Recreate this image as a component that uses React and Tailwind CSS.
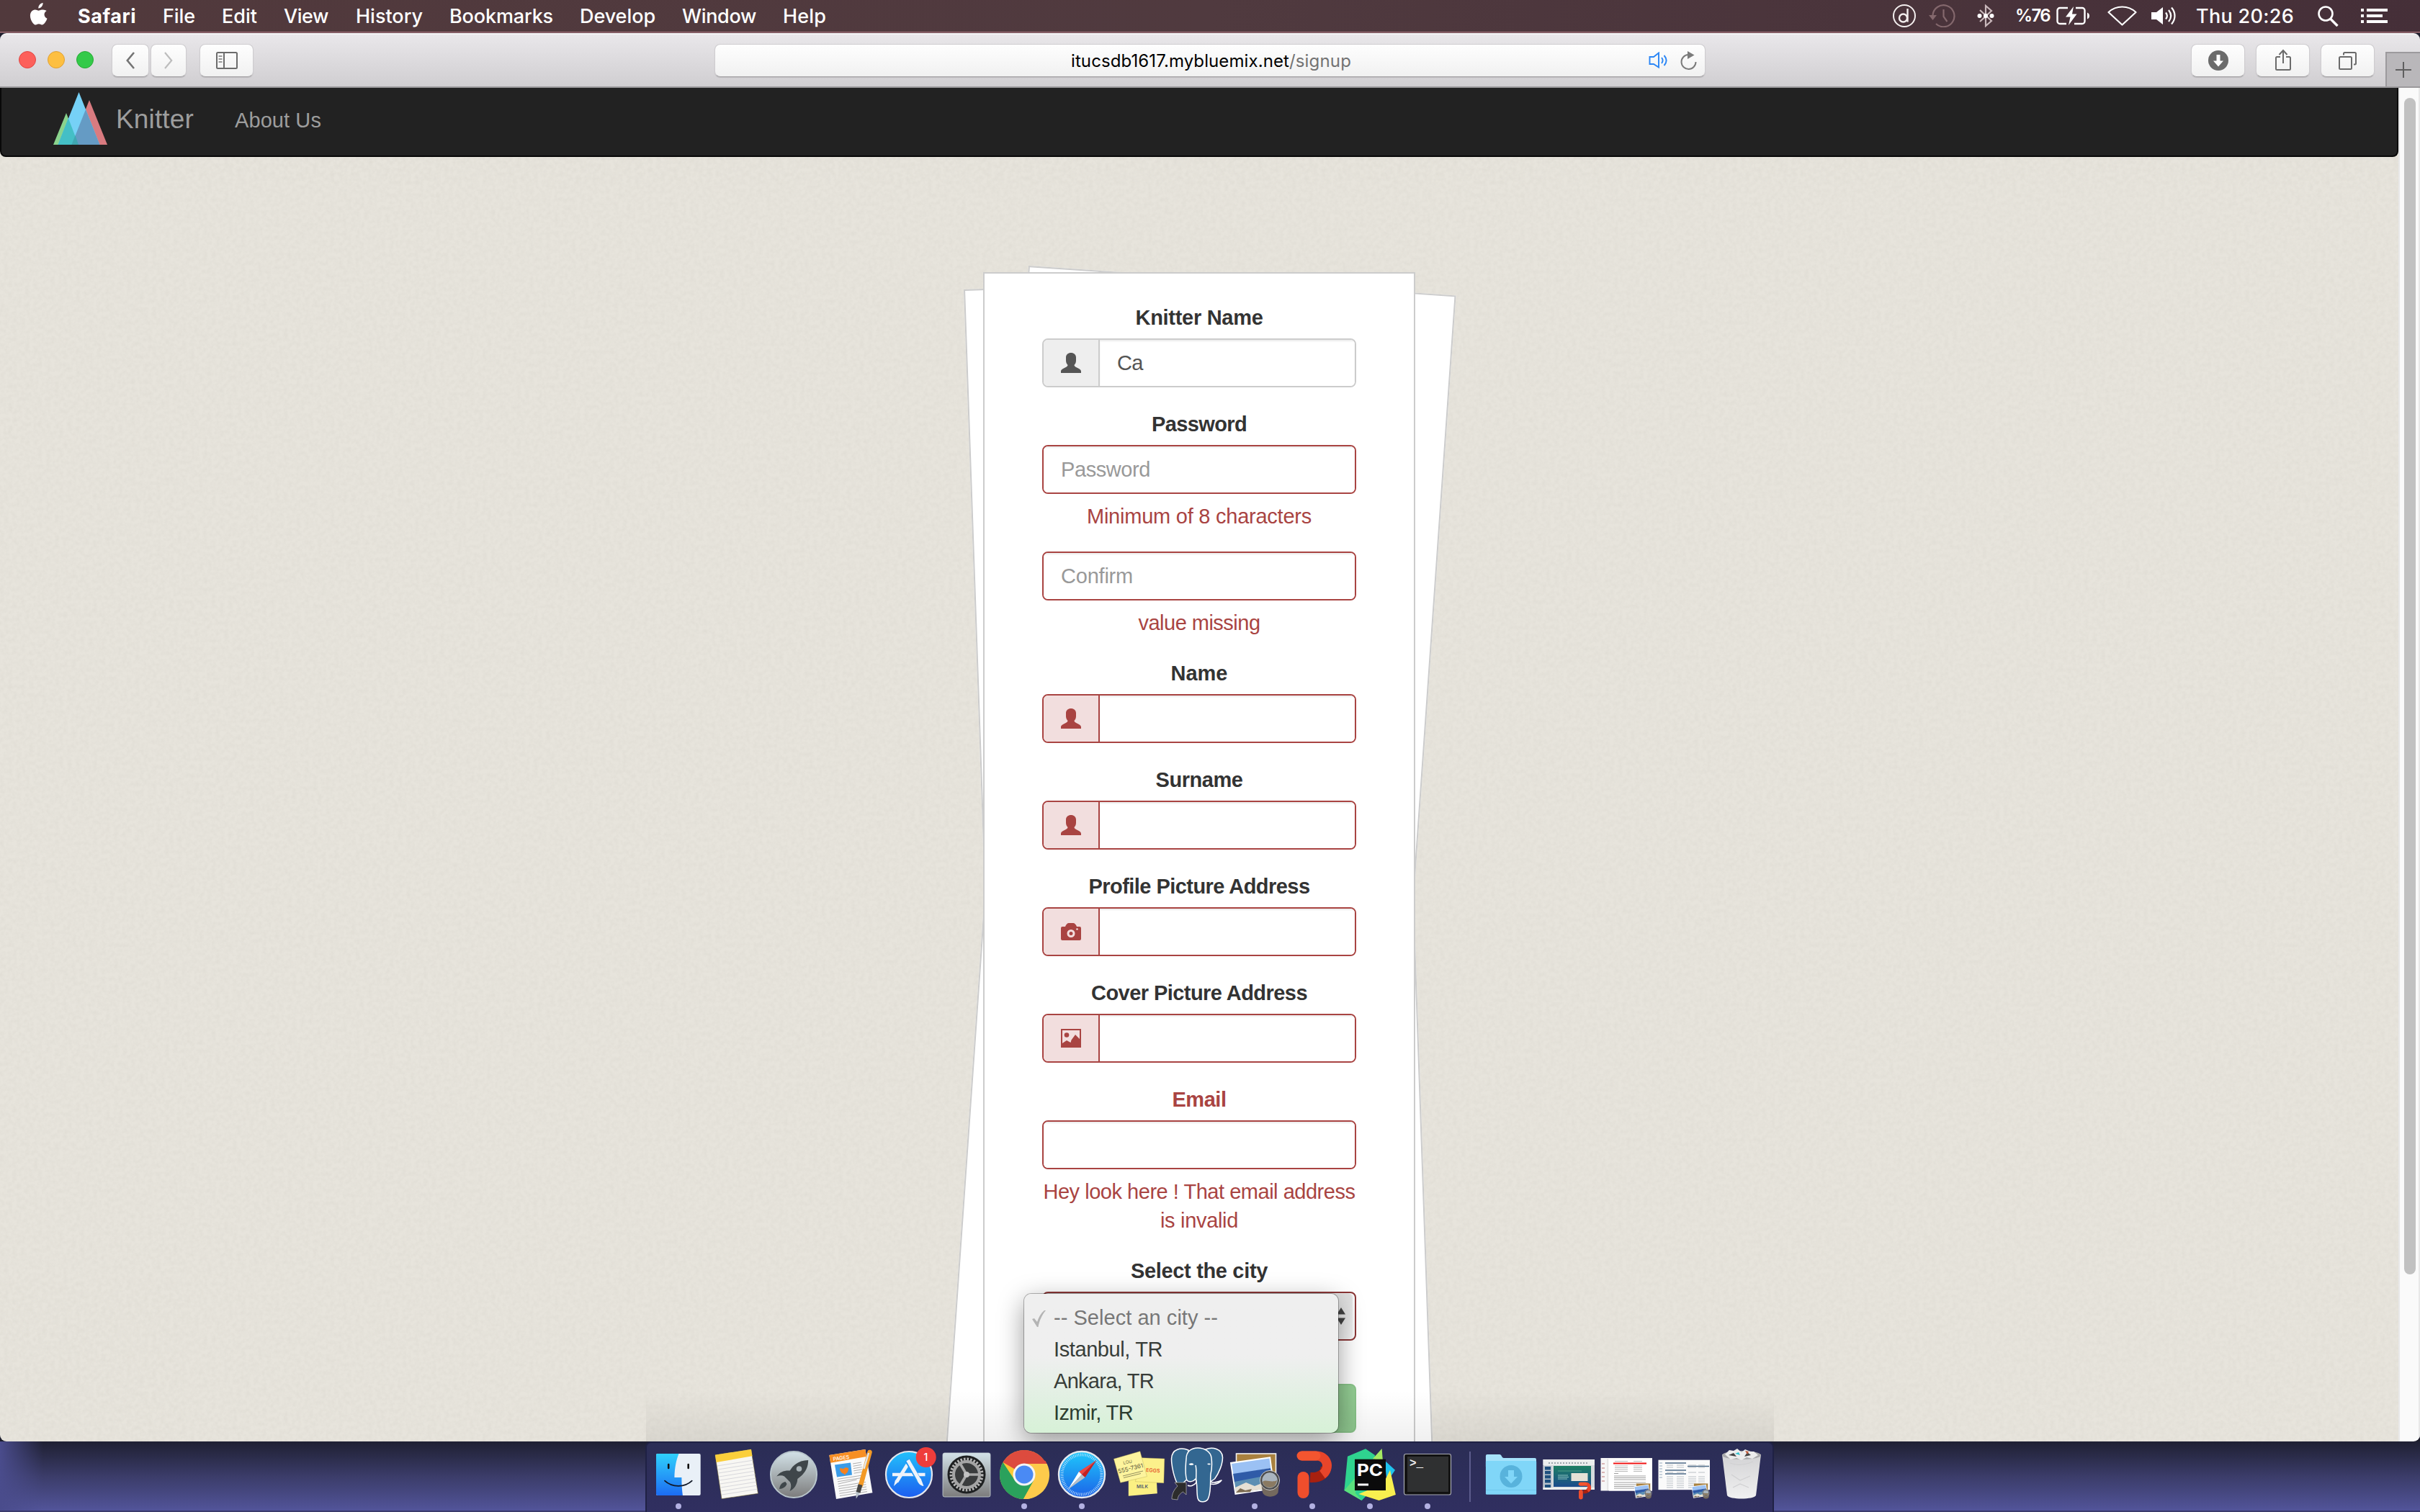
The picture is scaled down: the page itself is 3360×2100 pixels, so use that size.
import React, { useLayoutEffect, useRef, useState } from "react";

/* Text whose letter spacing is adjusted so that it fills exactly `w` pixels. */
function Fit({ w, className = "", children }) {
  const ref = useRef(null);
  const [spacing, setSpacing] = useState(0);
  useLayoutEffect(() => {
    const natural = ref.current.getBoundingClientRect().width;
    setSpacing((w - natural) / ref.current.textContent.length);
  }, []);
  return (
    <span ref={ref} className={"inline-block whitespace-pre " + className} style={{ letterSpacing: spacing + "px" }}>
      {children}
    </span>
  );
}

const MENUS = [
  ["File", 45, "ml-[37px]"],
  ["Edit", 49, "ml-[37px]"],
  ["View", 62, "ml-[37px]"],
  ["History", 93, "ml-[38px]"],
  ["Bookmarks", 144, "ml-[37px]"],
  ["Develop", 105, "ml-[37px]"],
  ["Window", 103, "ml-[37px]"],
  ["Help", 60, "ml-[37px]"],
];

function MenuBar() {
  return (
    <header className="flex h-11 w-full shrink-0 items-center bg-linear-to-r from-[#51393c] via-[#503a3f] to-[#452f38] pl-[41px] font-['Inter',sans-serif] text-[27px] leading-none text-white">
      <svg className="-mt-[5px] h-[32px] w-[27px]" viewBox="0 0 27 32" fill="#fff">
        <path d="M18.6 0c.2 2-.6 3.900-1.800 5.300-1.200 1.400-2.900 2.400-4.500 2.200-.2-1.900.7-3.900 1.700-5.100C15.200 1 17.200.1 18.600 0zM23.700 10.900c-2 1.200-3.200 3-3.200 5.200 0 2.600 1.600 4.700 4 5.600-.6 1.900-1.500 3.700-2.700 5.300-1.200 1.700-2.400 3.400-4.300 3.400-1.900 0-2.500-1.100-4.600-1.100-2.100 0-2.800 1.100-4.500 1.200-1.900.1-3.300-1.800-4.500-3.500C1.400 23.500-.4 17.200 2.100 13c1.200-2.100 3.400-3.400 5.700-3.500 1.800 0 3.500 1.200 4.600 1.200 1.100 0 3.200-1.500 5.300-1.300.9 0 4 .4 6 1.500z" />
      </svg>
      <Fit w={81} className="ml-[40px] font-bold">Safari</Fit>
      {MENUS.map(([t, w, c]) => (
        <Fit key={t} w={w} className={c + " font-medium"}>{t}</Fit>
      ))}
      <div className="ml-auto flex items-center">
        <svg className="h-8 w-8" viewBox="0 0 32 32" fill="none" stroke="#f3eeee" strokeWidth="2">
          <circle cx="16" cy="16" r="15" />
          <circle cx="14.500" cy="19" r="5.500" strokeWidth="2.400" />
          <path d="M20.500 6v18.500" strokeWidth="2.400" />
        </svg>
        <svg className="ml-[17px] h-8 w-[38px]" viewBox="0 0 38 32" fill="none" stroke="#84686d" strokeWidth="2.200">
          <path d="M6.500 15A15 15 0 1 1 11 27" />
          <path d="M1 15h11l-5.500 7z" fill="#84686d" stroke="none" />
          <path d="M21.500 7v10l5 7" />
        </svg>
        <svg className="ml-[30px] h-8 w-[24px]" viewBox="0 0 24 32" fill="none" stroke="#c9b8bb" strokeWidth="2.200">
          <path d="M4 8l16 15-8 7V2l8 7L4 24" />
          <g fill="#fff" stroke="none"><circle cx="3.500" cy="16" r="3" /><circle cx="12" cy="16" r="3" /><circle cx="20.500" cy="16" r="3" /></g>
        </svg>
        <Fit w={48} className="ml-[29px] text-[24px] font-semibold">%76</Fit>
        <svg className="ml-[9px] h-[26px] w-[47px]" viewBox="0 0 47 26" fill="none" stroke="#fff" strokeWidth="2.400">
          <path d="M16 2H5a3.500 3.500 0 0 0-3.500 3.500v15A3.500 3.500 0 0 0 5 24h9M27 2h9a3.500 3.500 0 0 1 3.500 3.500v15A3.500 3.500 0 0 1 36 24H25" />
          <path d="M43 8.500c4 1.500 4 7.500 0 9z" fill="#fff" stroke="none" />
          <path d="M24 0L13 14.500h6.500L17 26l11.500-15.500H22z" fill="#fff" stroke="none" />
        </svg>
        <svg className="ml-[24px] h-[28px] w-[41px]" viewBox="0 0 41 28" fill="none" stroke="#fff" strokeWidth="2.200" strokeLinejoin="round">
          <path d="M1.500 9C12-1 29-1 39.500 9l-19 17.500z" />
        </svg>
        <svg className="ml-[20px] h-[26px] w-[35px]" viewBox="0 0 35 26" fill="none" stroke="#fff" strokeWidth="2.200">
          <path d="M0 8h7l9-7v24l-9-7H0z" fill="#fff" stroke="none" />
          <path d="M20 8.500c2.500 3 2.500 6 0 9M24 5c4 5 4 11 0 16M28 1.500c6 7 6 16 0 23" />
        </svg>
        <Fit w={136} className="ml-[27px] font-medium">Thu 20:26</Fit>
        <svg className="ml-[33px] h-[29px] w-[30px]" viewBox="0 0 30 29" fill="none" stroke="#fff" strokeWidth="2.600">
          <circle cx="11" cy="11" r="9.500" /><path d="M17.500 18l10 10" strokeWidth="3.400" />
        </svg>
        <svg className="mr-[45px] ml-[30px] h-5 w-[37px]" viewBox="0 0 37 20" fill="#fff">
          <path d="M0 0h4v4H0zM8 0h29v4H8zM0 8h4v4H0zM8 8h22v4H8zM0 16h4v4H0zM8 16h29v4H8z" />
        </svg>
      </div>
    </header>
  );
}

function ToolButton({ className, children }) {
  return (
    <div className={"flex h-[46px] items-center justify-center rounded-[8px] border border-[#cfcdd0] border-b-[#a5a3a6] bg-linear-to-b from-[#fefefe] to-[#f1f1f1] shadow-[0_1px_1px_rgba(0,0,0,0.12)] " + className}>
      {children}
    </div>
  );
}

function Toolbar() {
  return (
    <div className="flex h-[76px] w-full shrink-0 items-start border-t-2 border-b-2 border-t-[#f5f4f6] border-b-[#9b999c] bg-linear-to-b from-[#e9e7ea] to-[#d0ced1]">
      <div className="mt-[23px] ml-[26px] flex gap-4">
        <i className="size-6 rounded-full border border-[#e04643] bg-[#fc605b]" />
        <i className="size-6 rounded-full border border-[#dfa035] bg-[#fdbf41]" />
        <i className="size-6 rounded-full border border-[#27a934] bg-[#34ca49]" />
      </div>
      <div className="mt-[13px] ml-[25px] flex">
        <ToolButton className="w-[52px]">
          <svg className="h-6 w-3" viewBox="0 0 12 24" fill="none" stroke="#747474" strokeWidth="2.600"><path d="M11 1L1.800 12 11 23" /></svg>
        </ToolButton>
        <ToolButton className="ml-[2px] w-[50px]">
          <svg className="h-6 w-3" viewBox="0 0 12 24" fill="none" stroke="#bdbdbd" strokeWidth="2.200"><path d="M1 1l9.200 11L1 23" /></svg>
        </ToolButton>
        <ToolButton className="ml-[18px] w-[75px]">
          <svg className="h-6 w-[30px]" viewBox="0 0 30 24" fill="none" stroke="#6c6c6c" strokeWidth="2">
            <rect x="1" y="1" width="28" height="22" rx="1.500" /><path d="M11 1v22" /><path d="M3.500 6h5M3.500 10h5M3.500 14h5" stroke="#999" />
          </svg>
        </ToolButton>
      </div>
      <ToolButton className="mt-[13px] ml-[640px] w-[1376px] font-['Inter',sans-serif] text-[24px]">
        <div className="mt-[2px] ml-[494px] flex leading-none text-black">
          <Fit w={303}>itucsdb1617.mybluemix.net</Fit>
          <Fit w={86} className="text-[#737373]">/signup</Fit>
        </div>
        <svg className="ml-auto h-[24px] w-[32px]" viewBox="0 0 32 24" fill="none" stroke="#2b86f5" strokeWidth="1.900">
          <path d="M1.500 7h5.500l7-5.500v20L7 17H1.500z" /><path d="M18 8c2 2.500 2 5.500 0 8M21.500 5c4 4.500 4 9.500 0 14" />
        </svg>
        <svg className="mr-[11px] ml-[11px] h-[27px] w-[24px]" viewBox="0 0 24 27" fill="none" stroke="#7b7b7b" strokeWidth="2">
          <path d="M12 5A10 10 0 1 0 22.500 15" /><path d="M11 0l9.500 5.500L11 11z" fill="#7b7b7b" stroke="none" />
        </svg>
      </ToolButton>
      <div className="mt-[13px] ml-auto flex gap-[15px]">
        <ToolButton className="w-[75px]">
          <svg className="size-7" viewBox="0 0 28 28"><circle cx="14" cy="14" r="14" fill="#6b6b6b" /><path d="M11.500 6h5v8.500h4.500L14 22.500 7 14.500h4.500z" fill="#fff" /></svg>
        </ToolButton>
        <ToolButton className="w-[75px]">
          <svg className="-mt-[2px] h-[31px] w-[24px]" viewBox="0 0 24 31" fill="none" stroke="#6b6b6b" strokeWidth="2">
            <path d="M8 11H3.500A1.500 1.500 0 0 0 2 12.500v15A1.500 1.500 0 0 0 3.500 29h17a1.500 1.500 0 0 0 1.500-1.500v-15a1.500 1.500 0 0 0-1.500-1.500H16M12 20V2M6.500 8L12 2l5.500 6" />
          </svg>
        </ToolButton>
        <ToolButton className="w-[75px]">
          <svg className="size-[25px]" viewBox="0 0 25 25" fill="none" stroke="#6b6b6b" strokeWidth="2">
            <rect x="1" y="7" width="17" height="17" rx="1.500" /><path d="M7 4.500V2.500A1.500 1.500 0 0 1 8.500 1h14A1.500 1.500 0 0 1 24 2.500V16a1.500 1.500 0 0 1-1.500 1.500H21" />
          </svg>
        </ToolButton>
      </div>
      <div className="mt-6 ml-[15px] flex h-12 w-12 items-center justify-center border-t-2 border-l-2 border-[#9c9a9d] bg-[#b9b7ba]">
        <svg className="size-[22px]" viewBox="0 0 22 22" stroke="#5f5f5f" strokeWidth="2"><path d="M11 0v22M0 11h22" /></svg>
      </div>
    </div>
  );
}

function NavBar() {
  return (
    <nav className="flex h-[96px] w-[3330px] items-start rounded-b-[8px] border-x-2 border-b-2 border-[#080808] bg-[#222]">
      <svg className="mt-[6px] ml-[72px] h-[73px] w-[75px]" viewBox="0 0 75 73">
        <path d="M18 29L0 73h35z" fill="#8ad48d" />
        <path d="M50 11L25.500 73H75z" fill="#d97b80" />
        <path d="M35.500 0L6.500 73h58z" fill="#76d1f6" />
        <path d="M20.800 36L6.500 73H35z" fill="#44bfc6" />
        <path d="M45 24L25.500 73h39z" fill="#659bc4" />
        <path d="M30.500 60L25.500 73H35z" fill="#3fa7b1" />
      </svg>
      <Fit w={108} className="mt-[24px] ml-[12px] text-[37px] leading-10 text-[#9d9d9d]">Knitter</Fit>
      <Fit w={120} className="mt-[25px] ml-[57px] text-[29px] leading-10 text-[#9d9d9d]">About Us</Fit>
    </nav>
  );
}

const UserIcon = () => (
  <svg className="size-7" viewBox="0 0 28 28" fill="currentColor">
    <path d="M7 6.500C7 2.500 10 0 14 0s7 2.500 7 6.500V11c0 3-1.500 5-2.500 6 0 1.500 1.500 2.500 4 3.700 4.500 2.100 5.500 3.300 5.500 5.300v2H0v-2c0-2 1-3.200 5.500-5.300C8 19.500 9.500 18.500 9.500 17 8.500 16 7 14 7 11z" />
  </svg>
);
const CameraIcon = () => (
  <svg className="h-6 w-7" viewBox="0 0 28 24">
    <path d="M2 5h4c1-3 3-5 5-5h6c2 0 4 2 5 5h4a2 2 0 0 1 2 2v15a2 2 0 0 1-2 2H2a2 2 0 0 1-2-2V7a2 2 0 0 1 2-2z" fill="currentColor" />
    <circle cx="14" cy="14.500" r="4" fill="none" stroke="#f2dede" strokeWidth="3" />
    <circle cx="22.500" cy="8.500" r="1.300" fill="#f2dede" />
  </svg>
);
const PictureIcon = () => (
  <svg className="h-[26px] w-7" viewBox="0 0 28 26">
    <path d="M0 0h28v26H0z" fill="currentColor" />
    <path d="M2 2h24v12l-6-6-5.500 7.500-1 3.500L8 16l-6 4z" fill="#f2dede" />
    <circle cx="8" cy="8.500" r="3.300" fill="currentColor" />
  </svg>
);

function Input({ icon, value, placeholder, normal }) {
  const line = normal ? "border-[#ccc]" : "border-[#a94442]";
  return (
    <div className={"flex h-[68px] w-full overflow-hidden rounded-[8px] border-2 " + line}>
      {icon && (
        <div className={"flex w-[78px] shrink-0 items-center justify-center border-r-2 " + (normal ? "border-[#ccc] bg-[#eee] text-[#555]" : "border-[#a94442] bg-[#f2dede] text-[#a94442]")}>
          {icon}
        </div>
      )}
      <div className="flex flex-1 items-center bg-white px-6 pt-px text-[29px] shadow-[inset_0_2px_2px_rgba(0,0,0,0.075)]">
        {value && <span className="tracking-tight text-[#555]">{value}</span>}
        {placeholder && <Fit w={placeholder[1]} className="text-[#999]">{placeholder[0]}</Fit>}
      </div>
    </div>
  );
}

function Group({ label, w, red, help, children }) {
  return (
    <div className="mb-[30px]">
      {label && (
        <div className="mb-[10px] flex h-10 justify-center pt-px">
          <Fit w={w} className={"text-[29px] leading-10 font-bold " + (red ? "text-[#a94442]" : "text-[#333]")}>{label}</Fit>
        </div>
      )}
      {children}
      {help && (
        <div className="mt-[11px] -mb-px flex flex-col items-center text-[29px] leading-10 text-[#a94442]">
          {help.map(([t, n]) => <Fit key={t} w={n}>{t}</Fit>)}
        </div>
      )}
    </div>
  );
}

function CitySelect() {
  return (
    <div className="relative h-[68px] w-full">
      <div className="flex h-full w-full items-center rounded-[8px] border-2 border-[#8b3636] bg-linear-to-b from-[#dedede] to-[#f2f2f2] shadow-[inset_-3px_0_2px_#fafafa]">
        <svg className="mr-[13px] ml-auto h-6 w-[12px]" viewBox="0 0 12 24" fill="#444"><path d="M6 0l6 9.500H0zM6 24l6-9.500H0z" /></svg>
      </div>
      <div className="absolute top-[3px] -left-[25px] z-20 flex h-[193px] w-[436px] flex-col rounded-[10px] bg-linear-to-b from-[#efefef] from-45% via-[#dff0e0] via-80% to-[#d7f1d7] pt-[12px] text-[29px] text-[#383d39] shadow-[0_0_0_1px_rgba(0,0,0,0.28),0_10px_36px_rgba(0,0,0,0.4)]">
        <div className="flex h-11 items-center text-[#777]">
          <svg className="ml-[11px] h-[23px] w-[19px]" viewBox="0 0 19 23" fill="#b4b4b4"><path d="M0 12l3-1 4 5C9 10 12 4 17 0l2 0C14 6 10 14 8.500 23H7z" /></svg>
          <Fit w={228} className="ml-[11px]">-- Select an city --</Fit>
        </div>
        <div className="flex h-11 items-center pl-[41px]"><Fit w={151}>Istanbul, TR</Fit></div>
        <div className="flex h-11 items-center pl-[41px]"><Fit w={139}>Ankara, TR</Fit></div>
        <div className="flex h-11 items-center pl-[41px] text-[#2c3d2f]"><Fit w={110}>Izmir, TR</Fit></div>
      </div>
    </div>
  );
}

function Page() {
  return (
    <main className="relative isolate h-[1880px] w-[3330px] overflow-hidden bg-[#e7e4dc]">
      <svg className="absolute inset-0 -z-20 h-full w-full" aria-hidden="true">
        <filter id="weave" x="0" y="0" width="100%" height="100%">
          <feTurbulence type="fractalNoise" baseFrequency="0.17" numOctaves="2" seed="4" />
          <feColorMatrix values="0 0 0 0 0.500  0 0 0 0 0.480  0 0 0 0 0.430  0.500 0 0 0 -0.170" />
        </filter>
        <rect width="100%" height="100%" filter="url(#weave)" opacity="0.5" />
      </svg>
      <NavBar />
      <div className="relative mt-[160px] ml-[1365px] w-[600px]">
        <div className="absolute top-[24px] -left-[27px] -z-10 h-[2200px] w-[595px] origin-top-left -rotate-2 border-2 border-[#ccc] bg-white" />
        <div className="absolute -top-[9px] left-[63px] -z-10 h-[2200px] w-[595px] origin-top-left rotate-4 border-2 border-[#ccc] bg-white" />
        <form className="h-[1800px] w-[600px] border-2 border-[#ccc] bg-white px-[80px] pt-[40px]">
          <Group label="Knitter Name" w={177}><Input normal icon={<UserIcon />} value="Ca" /></Group>
          <Group label="Password" w={132} help={[["Minimum of 8 characters", 312]]}><Input placeholder={["Password", 124]} /></Group>
          <Group help={[["value missing", 169]]}><Input placeholder={["Confirm", 100]} /></Group>
          <Group label="Name" w={79}><Input icon={<UserIcon />} /></Group>
          <Group label="Surname" w={121}><Input icon={<UserIcon />} /></Group>
          <Group label="Profile Picture Address" w={307}><Input icon={<CameraIcon />} /></Group>
          <Group label="Cover Picture Address" w={300}><Input icon={<PictureIcon />} /></Group>
          <Group label="Email" w={75} red help={[["Hey look here ! That email address", 433], ["is invalid", 108]]}><Input /></Group>
          <Group label="Select the city" w={190}><CitySelect /></Group>
          <div className="-mt-[30px] pt-[60px]"><div className="h-[68px] rounded-[8px] border-2 border-[#8ac58a] bg-[#93cd93]" /></div>
        </form>
      </div>
      <div className="pointer-events-none absolute bottom-0 left-[897px] z-10 h-[70px] w-[1566px] bg-linear-to-b from-transparent to-black/6" />
    </main>
  );
}

/* ---------- Dock ---------- */

const Finder = () => (
  <g>
    <rect x="9" y="17" width="61.700" height="58" rx="2" fill="#e9f0f7" />
    <path d="M11 17h29.500C36 28 34.500 40 34.400 50h10c0 10 .5 18 1.500 25H11a2 2 0 0 1-2-2V19a2 2 0 0 1 2-2z" fill="url(#finder)" />
    <path d="M26.200 32v5M53.700 32v5" stroke="#111" strokeWidth="2.600" strokeLinecap="round" />
    <path d="M21 54.700c10 9.500 28 9.500 37.700 0" fill="none" stroke="#111827" strokeWidth="1.800" strokeLinecap="round" />
  </g>
);
const Notes = () => (
  <g>
    <path d="M10.900 18.700L60.900 11l9.600 61.300L20 79.700z" fill="#f8f7f3" stroke="#6b5f2d" strokeWidth=".6" />
    <path d="M10.900 18.700L60.900 11l1.500 9.300L12.700 29z" fill="#fbcf3b" />
    {[0, 1, 2, 3, 4, 5, 6, 7, 8].map((i) => (
      <path key={i} d={`M${13.800 + i * 0.800} ${34 + i * 5}l49.500-7.800`} stroke="#cfcfd6" strokeWidth=".8" />
    ))}
  </g>
);
const Launchpad = () => (
  <g>
    <circle cx="40" cy="46" r="32" fill="url(#silver)" stroke="#b9c6cc" strokeWidth="2" />
    <path d="M60.200 26c-9 .3-16 3-22 9.500l-3.500 5c-8-.5-14 2-18.500 8 4-1.500 7.500-2 10.800 0l8 8c2 4 1.500 8-.5 12.500 6-3 10.500-9 10.800-17l5-4c7-6.500 9.700-13 9.900-22z" fill="#3f464a" />
    <circle cx="47.500" cy="38" r="3.800" fill="#aab4b8" />
    <path d="M28.500 56c-5 1-7.500 4-8.500 10 5-.3 9-2.500 10.500-7z" fill="#3f464a" />
  </g>
);
const Pages = () => (
  <g>
    <path d="M9.400 19l50-8 10 60.300L19 80z" fill="#fafafa" />
    <path d="M9.400 19l50-8 1.600 10-50 8.700z" fill="#f78f23" />
    <text x="15" y="27" transform="rotate(-8 15 27)" fontSize="7" fontWeight="500" fill="#fff" fontFamily="Inter">PAGES</text>
    <path d="M17 32.500l22-3 2 17-21 3z" fill="#3a9be8" />
    <path d="M24 37l5 1 3-2 4 1c0 5-2 7-4 8l-1 2-1-2c-4-1-6-4-6-8z" fill="#f58220" />
    {[0, 1, 2, 3, 4, 5, 6, 7].map((i) => (
      <path key={i} d={`M${20.500 + i * 0.500} ${52.500 + i * 3.300}l${i === 2 ? 26 : 38}-6`} stroke="#a6a6a6" strokeWidth=".9" />
    ))}
    {[0, 1, 2, 3, 4].map((i) => (
      <path key={i} d={`M${42 + i * 0.400} ${31 + i * 3.300}l12-2`} stroke="#a6a6a6" strokeWidth=".9" />
    ))}
    <path d="M65.500 15L53 61" stroke="#f39a26" strokeWidth="6.500" strokeLinecap="round" />
    <path d="M64 16L57.500 38" stroke="#dfe5ea" strokeWidth="2.500" />
    <path d="M52.500 60l-3 11" stroke="#444" strokeWidth="6" />
    <path d="M46.500 70l5.500 1.500-5.300 8z" fill="#b9c3cb" />
  </g>
);
const AppStore = () => (
  <g>
    <circle cx="40" cy="46" r="32" fill="url(#store)" stroke="#e4e6ec" strokeWidth="2.200" />
    <g stroke="#eef3fa" fill="none">
      <path d="M17 46h45.500" strokeWidth="4.600" />
      <path d="M38 32L23 56" strokeWidth="5" />
      <path d="M37.500 26l17 29" strokeWidth="7" stroke="#2196f3" /><path d="M38.500 26l16 28" strokeWidth="5" />
    </g>
    <path d="M21 53.500l4.500 2.600-6.500 6zM51.500 54l5-2.500 4 10.500c-4-.5-7.500-3-9-8z" fill="#eef3fa" />
    <circle cx="63.700" cy="22" r="14" fill="#ef3d3b" />
    <text x="63.500" y="27" textAnchor="middle" fontSize="14" fontWeight="500" fill="#fff" fontFamily="Inter">1</text>
  </g>
);
const Prefs = () => (
  <g>
    <rect x="7" y="16" width="66" height="61" rx="2.500" fill="url(#silver)" stroke="#c8d3d8" strokeWidth=".8" />
    <circle cx="40" cy="46" r="26.500" fill="#1e2021" />
    <circle cx="40" cy="46" r="21.500" fill="none" stroke="#b5b5b5" strokeWidth="4" strokeDasharray="2.600 2" />
    <circle cx="40" cy="46" r="18" fill="#3a3c3d" stroke="#a4a4a4" strokeWidth="4" />
    <path d="M40 46h18M40 46l-9-15.500M40 46l-9 15.500" stroke="#a8a8a8" strokeWidth="3.600" />
    <circle cx="40" cy="46" r="4" fill="#c2c2c2" />
  </g>
);
const Chrome = () => (
  <g>
    <circle cx="40" cy="46" r="34" fill="#fcc934" />
    <path d="M40 46L10.500 29A34 34 0 0 1 69.500 29z" fill="#dd4b3e" />
    <path d="M40 31h31.500a34 34 0 0 0-2-4L40 20z" fill="#dd4b3e" />
    <path d="M10.500 29A34 34 0 0 0 39 80L53.500 54 27 54z" fill="#2aa15c" />
    <path d="M40 31h31.600A34 34 0 0 1 39 80l14.500-26z" fill="#fdcb4b" />
    <circle cx="40" cy="46" r="15.500" fill="#f4f4f4" /><circle cx="40" cy="46" r="12.500" fill="#4a8af4" />
  </g>
);
const Safari = () => (
  <g>
    <circle cx="40" cy="46" r="32" fill="url(#compass)" stroke="#e6e9ee" strokeWidth="2.400" />
    <circle cx="40" cy="46" r="27.500" fill="none" stroke="#cbe8fb" strokeWidth="4" strokeDasharray=".8 1.600" />
    <path d="M60.500 26L36 42l4 4z" fill="#f0453f" /><path d="M60.500 26L44.500 50 40 46z" fill="#c8201f" />
    <path d="M21 66.500L36 42l4 4z" fill="#fff" /><path d="M21 66.500L44.500 50 40 46z" fill="#b9bfc6" />
  </g>
);
const Stickies = () => (
  <g fontFamily="Inter" fontSize="7.500">
    <path d="M24.800 52h39l1 20.300-40 3.400z" fill="#fbf083" />
    <path d="M43 22.700l31.800 1.300-1 33.700-39.500-2z" fill="#fcf18b" stroke="#b8a850" strokeWidth=".4" />
    <path d="M4.400 24.300L40.900 13.700l9.600 35-36.800 8.600z" fill="#fdf49d" stroke="#b8a850" strokeWidth=".4" />
    <text x="18" y="32" transform="rotate(-12 18 32)" fontSize="6" fill="#6d6a45">LOU</text>
    <text x="11" y="44.500" transform="rotate(-14 11 44.500)" fontSize="8" fill="#55533a">555-7361</text>
    <path d="M17 48l28-7M18 50.500l24-6" stroke="#777350" strokeWidth=".8" />
    <text x="49" y="42" transform="rotate(4 49 42)" fontSize="7" fontWeight="500" fill="#e2421c">EGGS</text>
    <text x="36" y="65" fontSize="6.500" fontWeight="500" fill="#3d4a6b">MILK</text>
  </g>
);
const Postgres = () => (
  <g fill="#336791" stroke="#fff" strokeWidth="1.500" strokeLinejoin="round">
    <path d="M28 12C18 8 5 10 4.500 24c0 11 4 28 9 36 3 3 6 1 8-3l6-6z" />
    <path d="M52 11c9-4 23-1 23.500 11 .3 9-5 22-11 30l-6 4z" />
    <path d="M25 24c0-10 7-15 16-15s18 5 19 14c.8 7 1 14-1 22-1 8 1 22-3 33-2 7-13 8-15 1-2-8 0-20-3-27-3 4-9 5-12 2-3-8-2-20-1-30z" />
    <path d="M38 33c2 8 0 16 1 24-3 4-8 6-12 4M59 56c4 2 9 1 15-2-4 5-10 6-15 5" fill="none" />
    <path d="M28.500 31.500c3-2 6-1.500 7 .5-2 1.500-5 1.500-7-.5zM54 31c2-1 4-.5 5 .5-2 1.500-4 1-5-.5z" fill="#fff" stroke="none" />
    <path d="M9 57h16v17l-4.500-4c-5 3-7 6-7.500 11l-8-1c0-7 3-13 8-18z" fill="#2c2c2c" stroke="#aaa" strokeWidth=".8" />
  </g>
);
const PreviewArt = () => (
  <g>
    <rect x="14.500" y="17" width="55" height="46" fill="#a9813f" stroke="#f3f3f3" strokeWidth="1.600" />
    <path d="M5.900 29L62 21.300 68 66l-55.400 8z" fill="#fff" />
    <path d="M8 31l52.500-7.500 1.800 13.500L10.500 46z" fill="#9bc1f4" />
    <path d="M10 45l52-8 2 10-52 10z" fill="#2f5ba8" />
    <path d="M12 56l52-10 2.300 18-52 7.500z" fill="#5c8fb3" />
    <path d="M13 64l15-7 12 5 10-4 16 6-52 8z" fill="#e6e0d4" /><path d="M14 71l6-6 7 3 9-2-2 4z" fill="#7c6b52" />
    <path d="M49 58h25l-1.500 13c-3 7-18 8-21.500 0z" fill="#74695e" />
    <circle cx="61" cy="54" r="12" fill="#a9b4bf" stroke="#4c4c4c" strokeWidth="2.600" /><circle cx="61" cy="54" r="13.600" fill="none" stroke="#c9c9c9" strokeWidth="1" />
    <path d="M51 56c5-4 12 2 20-2-1 7-5 10-10 10s-9-3-10-8z" fill="#8a7a62" />
  </g>
);
const PptArt = () => (
  <g fill="none" strokeLinecap="round">
    <path d="M37 50c14 1 23-6 21.500-16" stroke="#a8200f" strokeWidth="14" strokeLinecap="butt" />
    <path d="M25 20h20c17 0 20 18 9 26" stroke="#e8452a" strokeWidth="13" strokeLinecap="butt" />
    <path d="M25 20h20" stroke="#f4552f" strokeWidth="13" />
    <path d="M27.500 50v21" stroke="#f04e2c" strokeWidth="16" />
  </g>
);
const PyCharm = () => (
  <g>
    <path d="M9 20.700l25-10.400L47 19l-6 50-12.300 13L4.400 68z" fill="#2fd38f" />
    <path d="M4.400 68L20 50v22l8.700 10z" fill="#5be07c" />
    <path d="M44 24L56.600 10 58 28z" fill="#a5ea62" />
    <path d="M60 26l15 13.700L64 56z" fill="#1fc3ee" />
    <path d="M68 39.700l7.900 34.300-23.300 8-28.200-9 34-14z" fill="#f8ef4f" />
    <rect x="19" y="24.700" width="43" height="43.300" fill="#0b0b0b" />
    <text x="22" y="48" fontSize="23" fontWeight="700" fontFamily="Inter" fill="#fff" textLength="36" lengthAdjust="spacingAndGlyphs">PC</text>
    <path d="M23 60h15" stroke="#fff" strokeWidth="3" />
  </g>
);
const Terminal = () => (
  <g>
    <rect x="7.500" y="17.500" width="65" height="56.500" rx="2.500" fill="#111" stroke="#a9abb3" strokeWidth="1.200" />
    <rect x="12" y="21" width="57" height="49" fill="#2f3031" />
    <text x="15" y="35" fontSize="16" fontFamily="Liberation Mono" fontWeight="700" fill="#f2f2f2">{">_"}</text>
  </g>
);
const Folder = () => (
  <g>
    <path d="M4.900 20a2 2 0 0 1 2-2H24c3 0 3 5 6 5h43a2 2 0 0 1 2 2v10H4.900z" fill="#a6e2fa" />
    <rect x="4.900" y="27" width="70.300" height="46.700" rx="1.500" fill="#80d6f8" />
    <path d="M5 67.500h70" stroke="#6cc5ea" strokeWidth=".8" />
    <circle cx="40" cy="48.500" r="15.500" fill="#58b3dc" />
    <path d="M36 40h8v9h5l-9 9.500L31 49h5z" fill="#80d6f8" />
  </g>
);
const WinSlides = () => (
  <g>
    <rect x="4.500" y="25" width="71.500" height="42" fill="#d5dadd" /><rect x="4.500" y="25" width="71.500" height="8" fill="#eceeee" />
    <path d="M12 30h56" stroke="#9aa5ab" strokeWidth="2" strokeDasharray="2 2" />
    <rect x="4.500" y="34" width="12" height="33" fill="#b9c2cc" />
    {[35, 41, 47, 53, 60].map((y) => <rect key={y} x="7" y={y} width="8" height="4.500" fill="#1d4f7e" />)}
    <rect x="19" y="34" width="52" height="29" fill="url(#slide)" />
    <rect x="43.500" y="44" width="23" height="11" fill="#e5e1d6" /><path d="M25 47h14M25 49.500h15M25 52h13" stroke="#8fc7bf" strokeWidth="1" />
    <path d="M25 41h33" stroke="#5ba490" strokeWidth=".8" />
    <rect x="4.500" y="64" width="71.500" height="3" fill="#eceeee" />
    <g transform="translate(47 52) scale(.36)"><PptArt /></g>
  </g>
);
const WinDoc = () => (
  <g>
    <rect x="4.500" y="23" width="71.500" height="45.500" fill="#f6f6f6" /><rect x="16" y="25" width="60" height="43.500" fill="#fff" />
    <path d="M14 24v44" stroke="#d0d0d0" strokeWidth=".8" />
    <path d="M22 30.500h46" stroke="#f01616" strokeWidth="2" />
    {[27.500, 34, 36.500, 39, 41.500].map((y) => <path key={y} d={`M24 ${y}h18M50 ${y}h12`} stroke="#b2b2b2" strokeWidth=".9" />)}
    {[44.500, 48, 50.500, 53, 57, 60, 62.500, 65].map((y) => <path key={y} d={`M23 ${y}h${y === 44.500 ? 6 : 44}`} stroke="#a0a0a0" strokeWidth="1" />)}
    <path d="M8 30v26" stroke="#d8b4b4" strokeWidth="4" strokeDasharray="2 4" />
    <g transform="translate(48.500 52) scale(.36)"><PreviewArt /></g>
  </g>
);
const WinSheet = () => (
  <g>
    <rect x="4.500" y="25.700" width="71.500" height="41.500" fill="#fafafa" />
    <path d="M14 30h29M14 40h29M45 34.500h30M14 45h29" stroke="#4d6b88" strokeWidth="1.600" />
    {[33, 36, 43, 49, 52, 55, 58, 61, 64].map((y) => <path key={y} d={`M16 ${y}h9M30 ${y}h10M46 ${y}h11M60 ${y}h9`} stroke="#b3bac1" strokeWidth=".9" />)}
    <path d="M8 29v22" stroke="#c8d2dc" strokeWidth="4" strokeDasharray="2 2" />
    <g transform="translate(48.500 52) scale(.36)"><PreviewArt /></g>
  </g>
);
const Trash = () => (
  <g>
    <path d="M13 18l7 57c3 6 37 6 40 0l7-57z" fill="url(#bin)" />
    <ellipse cx="40" cy="19" rx="27" ry="6" fill="#a9a9ab" />
    <path d="M17 18l6-6 6 1 5-3 6 5 5-4 7 3 5 0 6 5-8 5-8-2-7 4-7-3-8 2z" fill="#ececec" />
    <path d="M22 19l7-3 4 5zM44 21l4-6 5 4z" fill="#444" /><path d="M31 17l5-2 2 4z" fill="#2ec2cf" /><path d="M45 13l5 1-2 4z" fill="#c05a3a" />
    <path d="M24 30c10 4 20 3 32-2M26 46l12 8 14-6M28 64l10-5 12 5" stroke="#d0d0d2" strokeWidth="1.300" fill="none" />
  </g>
);

const APPS = [
  [Finder, true], [Notes], [Launchpad], [Pages], [AppStore], [Prefs], [Chrome, true], [Safari, true], [Stickies],
  [Postgres], [PreviewArt, true], [PptArt, true], [PyCharm, true], [Terminal, true],
];
const FILES = [[Folder], [WinSlides], [WinDoc], [WinSheet], [Trash]];

const DockIcon = ({ Art, running }) => (
  <svg className="h-[96px] w-20 shrink-0" viewBox="0 2 80 96">
    <Art />
    {running && <circle cx="40" cy="90" r="4" fill="#b3b1e2" />}
  </svg>
);

function Gradient({ id, from, to }) {
  return <linearGradient id={id} x1="0" y1="0" x2="0" y2="1"><stop stopColor={from} /><stop offset="1" stopColor={to} /></linearGradient>;
}

function Dock() {
  return (
    <footer className="flex h-[98px] w-full shrink-0 border-b-2 border-[#3a3a6c] bg-linear-to-b from-[#1f2033] via-[#3b3c69] to-[#52549a]">
      <svg className="absolute size-0" aria-hidden="true">
        <defs>
          <Gradient id="finder" from="#2fd0fc" to="#1c6cf2" />
          <Gradient id="silver" from="#d3e2e8" to="#7c7c7c" />
          <Gradient id="store" from="#22c1fb" to="#1c5df0" />
          <Gradient id="compass" from="#1fc8fb" to="#1c62e8" />
          <Gradient id="slide" from="#1d7f63" to="#1b4c8c" />
          <Gradient id="bin" from="#d2d2d4" to="#f1f1f2" />
        </defs>
      </svg>
      <div className="h-full w-[60px] bg-linear-to-r from-[#4a4c8c] to-transparent" />
      <div className="ml-[836px] flex h-[98px] w-[1567px] rounded-t-[8px] border-2 border-b-0 border-[#1f2144] bg-linear-to-b from-[#2b2d55] to-[#302f60] pl-[4px]">
        {APPS.map(([Art, running], i) => <DockIcon key={i} Art={Art} running={running} />)}
        <div className="mt-3 mr-4 ml-[18px] h-[70px] w-[2px] bg-[#5c5c8c]" />
        {FILES.map(([Art], i) => <DockIcon key={i} Art={Art} />)}
      </div>
    </footer>
  );
}

export default function App() {
  return (
    <div className="flex h-[2100px] w-[3360px] flex-col overflow-hidden bg-[#1c1d2c] font-['Liberation_Sans',sans-serif]">
      <MenuBar />
      <div className="h-[2px] shrink-0 border-t border-[#a8757d] bg-[#6b4b52]" />
      <div className="flex h-[1956px] shrink-0 flex-col overflow-hidden rounded-[9px]">
        <Toolbar />
        <div className="flex">
          <Page />
          <aside className="h-[1880px] w-[30px] border-r-2 border-l-2 border-[#e8e8e8] bg-[#fafafa] pt-[14px] pl-[6px]">
            <div className="h-[1634px] w-4 rounded-full bg-[#c1c1c1]" />
          </aside>
        </div>
      </div>
      <Dock />
    </div>
  );
}
